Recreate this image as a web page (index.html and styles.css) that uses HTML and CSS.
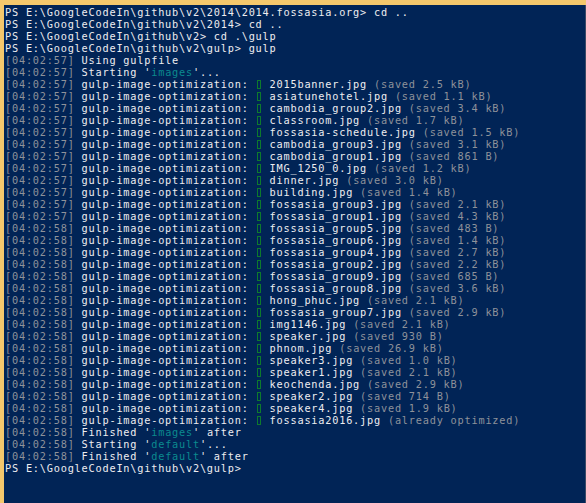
FILE: index.html
```html
<!DOCTYPE html>
<html>
<head>
<meta charset="utf-8">
<link rel="stylesheet" href="styles.css">
</head>
<body>
<div class="frame">
<div class="console">
<div class="ln">PS E:\GoogleCodeIn\github\v2\2014\2014.fossasia.org&gt; cd ..</div>
<div class="ln">PS E:\GoogleCodeIn\github\v2\2014&gt; cd ..</div>
<div class="ln">PS E:\GoogleCodeIn\github\v2&gt; cd .\gulp</div>
<div class="ln">PS E:\GoogleCodeIn\github\v2\gulp&gt; gulp</div>
<div class="ln"><span class="ts">[04:02:57]</span> Using gulpfile</div>
<div class="ln"><span class="ts">[04:02:57]</span> Starting '<span class="cy">images</span>'...</div>
<div class="ln"><span class="ts">[04:02:57]</span> gulp-image-optimization: <span class="tk"></span> 2015banner.jpg <span class="gr">(saved 2.5 kB)</span></div>
<div class="ln"><span class="ts">[04:02:57]</span> gulp-image-optimization: <span class="tk"></span> asiatunehotel.jpg <span class="gr">(saved 1.1 kB)</span></div>
<div class="ln"><span class="ts">[04:02:57]</span> gulp-image-optimization: <span class="tk"></span> cambodia_group2.jpg <span class="gr">(saved 3.4 kB)</span></div>
<div class="ln"><span class="ts">[04:02:57]</span> gulp-image-optimization: <span class="tk"></span> classroom.jpg <span class="gr">(saved 1.7 kB)</span></div>
<div class="ln"><span class="ts">[04:02:57]</span> gulp-image-optimization: <span class="tk"></span> fossasia-schedule.jpg <span class="gr">(saved 1.5 kB)</span></div>
<div class="ln"><span class="ts">[04:02:57]</span> gulp-image-optimization: <span class="tk"></span> cambodia_group3.jpg <span class="gr">(saved 3.1 kB)</span></div>
<div class="ln"><span class="ts">[04:02:57]</span> gulp-image-optimization: <span class="tk"></span> cambodia_group1.jpg <span class="gr">(saved 861 B)</span></div>
<div class="ln"><span class="ts">[04:02:57]</span> gulp-image-optimization: <span class="tk"></span> IMG_1250_0.jpg <span class="gr">(saved 1.2 kB)</span></div>
<div class="ln"><span class="ts">[04:02:57]</span> gulp-image-optimization: <span class="tk"></span> dinner.jpg <span class="gr">(saved 3.0 kB)</span></div>
<div class="ln"><span class="ts">[04:02:57]</span> gulp-image-optimization: <span class="tk"></span> building.jpg <span class="gr">(saved 1.4 kB)</span></div>
<div class="ln"><span class="ts">[04:02:57]</span> gulp-image-optimization: <span class="tk"></span> fossasia_group3.jpg <span class="gr">(saved 2.1 kB)</span></div>
<div class="ln"><span class="ts">[04:02:57]</span> gulp-image-optimization: <span class="tk"></span> fossasia_group1.jpg <span class="gr">(saved 4.3 kB)</span></div>
<div class="ln"><span class="ts">[04:02:58]</span> gulp-image-optimization: <span class="tk"></span> fossasia_group5.jpg <span class="gr">(saved 483 B)</span></div>
<div class="ln"><span class="ts">[04:02:58]</span> gulp-image-optimization: <span class="tk"></span> fossasia_group6.jpg <span class="gr">(saved 1.4 kB)</span></div>
<div class="ln"><span class="ts">[04:02:58]</span> gulp-image-optimization: <span class="tk"></span> fossasia_group4.jpg <span class="gr">(saved 2.7 kB)</span></div>
<div class="ln"><span class="ts">[04:02:58]</span> gulp-image-optimization: <span class="tk"></span> fossasia_group2.jpg <span class="gr">(saved 2.2 kB)</span></div>
<div class="ln"><span class="ts">[04:02:58]</span> gulp-image-optimization: <span class="tk"></span> fossasia_group9.jpg <span class="gr">(saved 685 B)</span></div>
<div class="ln"><span class="ts">[04:02:58]</span> gulp-image-optimization: <span class="tk"></span> fossasia_group8.jpg <span class="gr">(saved 3.6 kB)</span></div>
<div class="ln"><span class="ts">[04:02:58]</span> gulp-image-optimization: <span class="tk"></span> hong_phuc.jpg <span class="gr">(saved 2.1 kB)</span></div>
<div class="ln"><span class="ts">[04:02:58]</span> gulp-image-optimization: <span class="tk"></span> fossasia_group7.jpg <span class="gr">(saved 2.9 kB)</span></div>
<div class="ln"><span class="ts">[04:02:58]</span> gulp-image-optimization: <span class="tk"></span> img1146.jpg <span class="gr">(saved 2.1 kB)</span></div>
<div class="ln"><span class="ts">[04:02:58]</span> gulp-image-optimization: <span class="tk"></span> speaker.jpg <span class="gr">(saved 930 B)</span></div>
<div class="ln"><span class="ts">[04:02:58]</span> gulp-image-optimization: <span class="tk"></span> phnom.jpg <span class="gr">(saved 26.9 kB)</span></div>
<div class="ln"><span class="ts">[04:02:58]</span> gulp-image-optimization: <span class="tk"></span> speaker3.jpg <span class="gr">(saved 1.0 kB)</span></div>
<div class="ln"><span class="ts">[04:02:58]</span> gulp-image-optimization: <span class="tk"></span> speaker1.jpg <span class="gr">(saved 2.1 kB)</span></div>
<div class="ln"><span class="ts">[04:02:58]</span> gulp-image-optimization: <span class="tk"></span> keochenda.jpg <span class="gr">(saved 2.9 kB)</span></div>
<div class="ln"><span class="ts">[04:02:58]</span> gulp-image-optimization: <span class="tk"></span> speaker2.jpg <span class="gr">(saved 714 B)</span></div>
<div class="ln"><span class="ts">[04:02:58]</span> gulp-image-optimization: <span class="tk"></span> speaker4.jpg <span class="gr">(saved 1.9 kB)</span></div>
<div class="ln"><span class="ts">[04:02:58]</span> gulp-image-optimization: <span class="tk"></span> fossasia2016.jpg <span class="gr">(already optimized)</span></div>
<div class="ln"><span class="ts">[04:02:58]</span> Finished '<span class="cy">images</span>' after</div>
<div class="ln"><span class="ts">[04:02:58]</span> Starting '<span class="cy">default</span>'...</div>
<div class="ln"><span class="ts">[04:02:58]</span> Finished '<span class="cy">default</span>' after</div>
<div class="ln">PS E:\GoogleCodeIn\github\v2\gulp&gt;</div>
</div>
</div>
</body>
</html>
```

FILE: styles.css
```css
html, body {
  margin: 0;
  padding: 0;
  background: #f4c86c;
  height: 100%;
}
.frame {
  padding: 5px 0 0 4px;
  height: 100%;
  box-sizing: border-box;
}
.console {
  background: #012456;
  height: 100%;
  box-sizing: border-box;
  padding: 1px 0 0 1px;
  color: #eeedf0;
  font-family: "DejaVu Sans Mono", "Liberation Mono", monospace;
  font-size: 10.25px;
  letter-spacing: 0.79px;
  line-height: 12px;
  border-right: 1px solid #3a4a66;
}
.ln {
  white-space: pre;
  height: 12px;
}
.ts { color: #8e929a; }
.gr { color: #8e929a; }
.cy { color: #0b8a8f; }
.tk {
  display: inline-block;
  width: 4px;
  height: 9px;
  box-sizing: border-box;
  border: 1px solid #0e7a2c;
  vertical-align: -1px;
  margin-left: 1px;
  margin-right: 2px;
}
```
